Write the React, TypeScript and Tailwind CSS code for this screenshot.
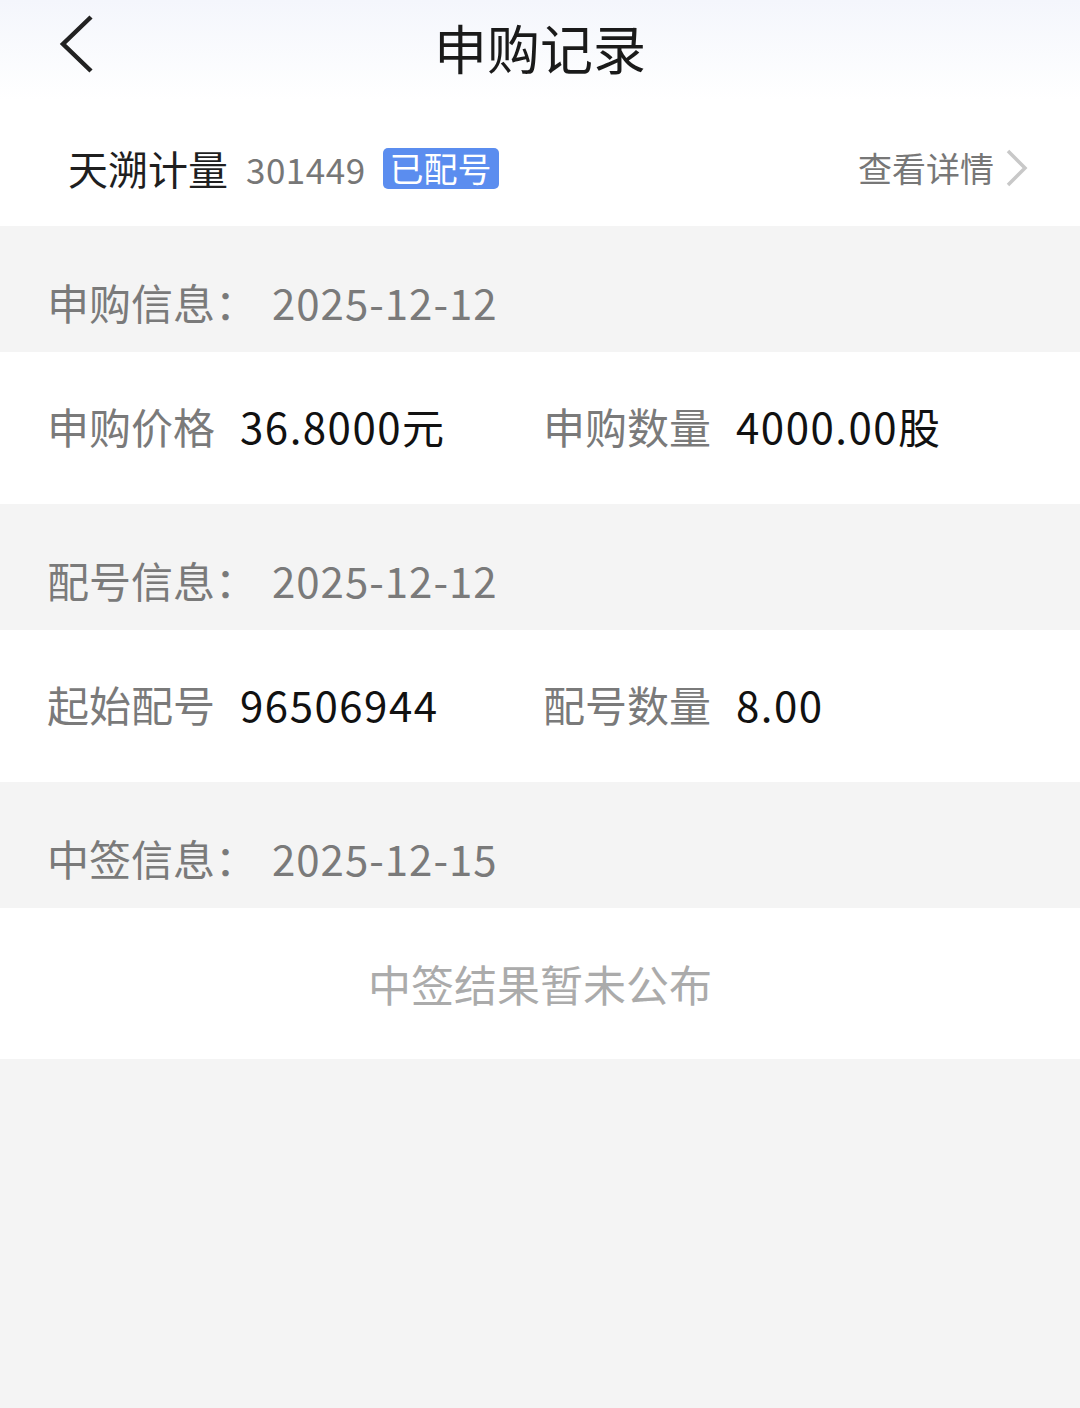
import React from "react";

const font = { fontFamily: '"Noto Sans CJK SC", "Noto Sans", sans-serif' };

function SectionHead({ label, date }: { label: string; date: string }) {
  return (
    <div className="h-[126px] bg-[#f4f4f4] flex items-end pb-[29px] pl-[47px] text-[42px] leading-none text-[#7a7a7a]">
      <span className="w-[225px]">{label}</span>
      <span className="tracking-[1px]">{date}</span>
    </div>
  );
}

function Pair({ label, value }: { label: string; value: string }) {
  return (
    <div className="flex items-center gap-[25px] text-[42px] leading-none">
      <span className="text-[#7a7a7a]">{label}</span>
      <span className="text-[#111] tracking-[1.5px]">{value}</span>
    </div>
  );
}

function DataRow({ a, b }: { a: [string, string]; b: [string, string] }) {
  return (
    <div className="h-[152px] bg-white grid grid-cols-[496px_1fr] items-center pl-[47px] pb-[4px]">
      <Pair label={a[0]} value={a[1]} />
      <Pair label={b[0]} value={b[1]} />
    </div>
  );
}

export default function App() {
  return (
    <div style={font} className="w-[1080px] min-h-[1408px] bg-[#f4f4f4]">
      <div className="relative h-[100px] flex items-center justify-center pb-[6px] bg-gradient-to-b from-[#f4f6fc] to-white">
        <svg className="absolute left-[58px] top-[14px]" width="40" height="62" viewBox="0 0 40 62">
          <path d="M33 3 L5 30 L33 57" fill="none" stroke="#222" strokeWidth="4.5" />
        </svg>
        <span className="text-[53px] leading-none text-[#1a1a1a] font-normal">申购记录</span>
      </div>
      <div className="h-[126px] pt-[10px] bg-white flex items-center pl-[68px] pr-[50px]">
        <span className="text-[40px] leading-none text-[#1f1f1f]">天溯计量</span>
        <span className="ml-[18px] text-[35px] leading-none text-[#777] tracking-[0.5px]">301449</span>
        <span className="ml-[17px] h-[41px] px-[7px] rounded-[5px] bg-[#5b8def] text-white text-[34px] leading-none flex items-center">已配号</span>
        <div className="ml-auto flex items-center">
          <span className="text-[34px] leading-none text-[#777]">查看详情</span>
          <svg className="ml-[10px]" width="26" height="40" viewBox="0 0 26 40">
            <path d="M4 3 L21 20 L4 37" fill="none" stroke="#c8c8c8" strokeWidth="3.5" />
          </svg>
        </div>
      </div>

      <SectionHead label="申购信息：" date="2025-12-12" />
      <DataRow a={["申购价格", "36.8000元"]} b={["申购数量", "4000.00股"]} />

      <SectionHead label="配号信息：" date="2025-12-12" />
      <DataRow a={["起始配号", "96506944"]} b={["配号数量", "8.00"]} />

      <SectionHead label="中签信息：" date="2025-12-15" />
      <div className="h-[151px] bg-white flex items-center justify-center text-[43px] leading-none text-[#ababab]">
        中签结果暂未公布
      </div>
    </div>
  );
}
